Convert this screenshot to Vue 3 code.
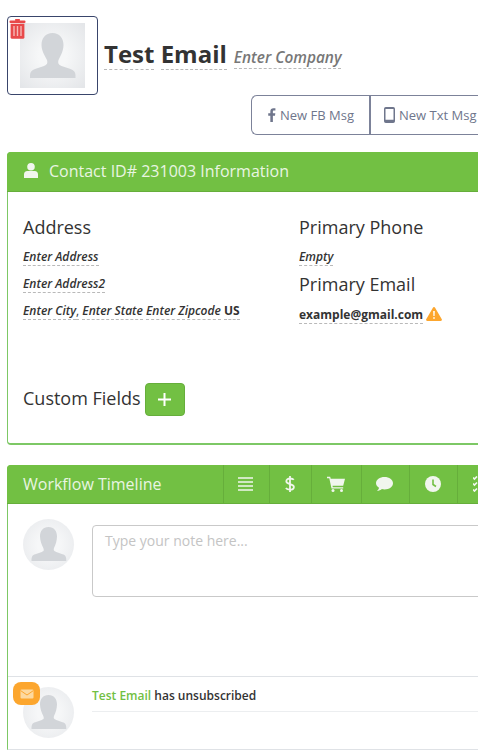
<template>
  <div class="page">
    <header class="contact-head">
      <div class="photo">
        <svg class="trash" viewBox="0 0 17 20">
          <rect x="0.5" y="1.5" width="16" height="2.4" rx="1" fill="#e8494a" />
          <rect x="6" y="0" width="5" height="2" rx="0.8" fill="#e8494a" />
          <path d="M1.6 4.8h13.8v13.4a1.6 1.6 0 0 1-1.6 1.6H3.2a1.6 1.6 0 0 1-1.6-1.6z" fill="#e8494a" />
          <path d="M5 7v10M8.5 7v10M12 7v10" stroke="#f6b9b6" stroke-width="1.4" />
        </svg>
        <div class="photo-img">
          <svg viewBox="0 0 65 65" width="65" height="65">
            <path :d="bust" fill="#d2d5d9" />
          </svg>
        </div>
      </div>
      <h1 class="name">
        <span class="edit">Test</span> <span class="edit">Email</span>
        <span class="company edit">Enter Company</span>
      </h1>
    </header>

    <div class="msg-row">
      <button class="msg-btn first">
        <svg class="ico-fb" viewBox="0 0 9 16"><path d="M2.6 16V8.8H.2V6h2.4V3.9C2.6 1.500 4 .2 6.200 .2c1 0 1.900.1 2.200.1v2.500H6.900c-1.200 0-1.400.6-1.400 1.400V6h2.800l-.4 2.800H5.500V16z" fill="#6f768c" /></svg>
        New FB Msg
      </button>
      <button class="msg-btn">
        <svg class="ico-phone" viewBox="0 0 11 16"><path fill-rule="evenodd" d="M1.800 0h7.400A1.800 1.800 0 0 1 11 1.800v12.400A1.800 1.800 0 0 1 9.200 16H1.800A1.800 1.800 0 0 1 0 14.200V1.800A1.800 1.800 0 0 1 1.800 0zM1.500 2v10.800h8V2z" fill="#6f768c" /></svg>
        New Txt Msg
      </button>
    </div>

    <section class="card info">
      <div class="card-head">
        <svg class="ico-user" viewBox="0 0 14 15"><path d="M7 0a3.800 3.800 0 1 1 0 7.600A3.800 3.800 0 0 1 7 0zM3.500 8h7A3.500 3.500 0 0 1 14 11.500V15H0v-3.500A3.500 3.500 0 0 1 3.500 8z" fill="#f1f6ee" /></svg>
        <span>Contact ID# 231003 Information</span>
      </div>
      <div class="info-body">
        <div class="cols">
          <div class="col-left">
            <h3>Address</h3>
            <p class="line"><em class="edit">Enter Address</em></p>
            <p class="line"><em class="edit">Enter Address2</em></p>
            <p class="line"><em class="edit">Enter City</em><span class="edit">,</span> <em class="edit">Enter State</em> <em class="edit">Enter Zipcode</em> <b class="edit">US</b></p>
          </div>
          <div class="col-right">
            <h3>Primary Phone</h3>
            <p class="line"><em class="edit">Empty</em></p>
            <h3 class="email-title">Primary Email</h3>
            <p class="line email">
              <b class="edit">example@gmail.com</b>
              <svg class="ico-warn" viewBox="0 0 16 14"><path d="M8 0c.5 0 .9.3 1.100.7l6.700 11.500c.4.800-.1 1.800-1.100 1.800H1.300c-1 0-1.500-1-1.100-1.800L6.900.7C7.100.3 7.500 0 8 0z" fill="#fca62e" /><path d="M7.200 4h1.600l-.2 5H7.400zM7.200 10.200h1.600v1.600H7.200z" fill="#fff" /></svg>
            </p>
          </div>
        </div>
        <div class="custom">
          <h3>Custom Fields</h3>
          <button class="add">
            <svg viewBox="0 0 13 13" width="13" height="13"><path d="M6.500 0v13M0 6.500h13" stroke="#fff" stroke-width="2" /></svg>
          </button>
        </div>
      </div>
    </section>

    <section class="card timeline">
      <div class="tl-head">
        <div class="tl-title">Workflow Timeline</div>
        <div class="tab" style="width: 46px">
          <svg viewBox="0 0 15 14" width="15" height="14"><path d="M0 1h15M0 5h15M0 9h15M0 13h15" stroke="#f1f6ee" stroke-width="1.600" /></svg>
        </div>
        <div class="tab" style="width: 42px">
          <svg viewBox="0 0 10 16" width="10" height="16"><path d="M8.800 3.800C8 2.800 6.500 2.500 5 2.500c-2 0-3.700.9-3.700 2.700 0 3.800 7.600 1.800 7.600 5.700 0 1.800-1.900 2.700-3.900 2.700-1.700 0-3.300-.5-4.100-1.700M5 0v16" fill="none" stroke="#f1f6ee" stroke-width="1.800" /></svg>
        </div>
        <div class="tab" style="width: 50px">
          <svg viewBox="0 0 18 16" width="18" height="16"><path d="M0 .8h3.200l.5 2H18l-1.800 7H5.500l.3 1.400h10.400v1.400H4.500L2.300 2.300H0z" fill="#f1f6ee" /><circle cx="6" cy="14.500" r="1.500" fill="#f1f6ee" /><circle cx="14.500" cy="14.500" r="1.500" fill="#f1f6ee" /></svg>
        </div>
        <div class="tab" style="width: 48px">
          <svg viewBox="0 0 17 14" width="17" height="14"><path d="M8.500 0C13.200 0 17 2.700 17 6.200s-3.800 6.200-8.500 6.200c-.9 0-1.800-.1-2.600-.3C4.800 13.200 3 14 1 14c1-1 1.800-2 2-3.300C1.200 9.600 0 8 0 6.200 0 2.700 3.800 0 8.500 0z" fill="#f1f6ee" /></svg>
        </div>
        <div class="tab" style="width: 48px">
          <svg viewBox="0 0 16 16" width="16" height="16"><circle cx="8" cy="8" r="8" fill="#f1f6ee" /><path d="M8 3.500V8.500L11 10.500" fill="none" stroke="#72c043" stroke-width="1.600" /></svg>
        </div>
        <div class="tab" style="width: 48px">
          <svg viewBox="0 0 16 16" width="16" height="16"><path d="M0 1.500l1.500 1.500L4 .5M0 7.500l1.500 1.500L4 6.500M0 13.500l1.500 1.500L4 12.500M6.500 2h9.500M6.500 8h9.500M6.500 14h9.500" fill="none" stroke="#f1f6ee" stroke-width="1.700" /></svg>
        </div>
      </div>
      <div class="composer">
        <div class="round">
          <svg viewBox="0 0 51 51" width="51" height="51"><path :d="bustSmall" fill="#d2d5d9" /></svg>
        </div>
        <div class="note">Type your note here...</div>
      </div>
      <div class="event">
        <div class="event-avatar">
          <div class="round">
            <svg viewBox="0 0 51 51" width="51" height="51"><path :d="bustSmall" fill="#d2d5d9" /></svg>
          </div>
          <div class="badge">
            <svg viewBox="0 0 14 10" width="14" height="10"><rect x="0.500" y="0.500" width="13" height="9" rx="1" fill="#fdd9a0" /><path d="M.5 1.500L7 6l6.500-4.500" fill="none" stroke="#fca62e" stroke-width="1" /></svg>
          </div>
        </div>
        <div class="event-text">
          <div class="event-line"><a class="who">Test Email</a> has unsubscribed</div>
        </div>
      </div>
    </section>
  </div>
</template>

<script setup>
const bust = "M32.500 10c7 0 11 5 11 12 0 6-3 11-5 15-1 3 0 5 3 6l9 3c3 1 5 3 5 6v3H10v-3c0-3 2-5 5-6l9-3c3-1 4-3 3-6-2-4-5.500-9-5.500-15 0-7 4-12 11-12z";
const bustSmall = "M25.500 8c5.500 0 8.500 4 8.500 9.500 0 4-1.500 8.500-3 11.500-.8 2.300 0 3 2.300 3.900l6.200 2.300c3 .8 3.800 2.300 3.800 6.800H8.500c0-4.500 .8-6 3.800-6.800l6.500-2.300c2.300-.9 2.300-1.600 1.500-3.900-1.500-3-3.300-7.500-3.300-11.500C17 12 20 8 25.500 8z";
</script>

<style>
html,
body {
  margin: 0;
  background: #fff;
}
</style>

<style scoped>
.page {
  width: 478px;
  height: 750px;
  overflow: hidden;
  position: relative;
  box-sizing: border-box;
  padding: 16px 0 0 7px;
  font-family: "Open Sans", sans-serif;
  color: #333;
}

.contact-head {
  display: flex;
  align-items: flex-start;
}

.photo {
  position: relative;
  width: 91px;
  height: 79px;
  box-sizing: border-box;
  border: 1px solid #39456b;
  border-radius: 4px;
  padding: 6px 0 0 12px;
}

.photo-img {
  width: 65px;
  height: 65px;
  background: radial-gradient(circle, #f6f7f8 30%, #e3e5e8 100%);
}

.photo-img svg {
  display: block;
}

.trash {
  position: absolute;
  left: 1px;
  top: 2px;
  width: 17px;
  height: 20px;
}

.name {
  margin: 21px 0 0 6px;
  font-size: 24px;
  line-height: 33px;
  font-weight: 700;
  color: #333;
  white-space: nowrap;
}

.edit {
  border-bottom: 1px dashed #b9b9b9;
}

.name .edit {
  display: inline-block;
  line-height: 31px;
}

.name .company {
  margin-left: 7px;
  font-size: 15.4px;
  line-height: 20px;
  font-style: italic;
  font-weight: 600;
  color: #777;
}

.msg-row {
  display: flex;
  margin: 0 0 0 244px;
  height: 40px;
}

.msg-btn {
  flex: none;
  box-sizing: border-box;
  height: 40px;
  padding: 0 14px 0 13px;
  display: flex;
  align-items: center;
  background: #fff;
  border: 1px solid #7c8299;
  border-left-width: 2px;
  font-family: inherit;
  font-size: 13px;
  color: #6f768c;
  white-space: nowrap;
}

.msg-btn.first {
  width: 118px;
  padding: 0 0 0 16px;
  border-left-width: 1px;
  border-right-width: 0;
  border-radius: 6px 0 0 6px;
}

.ico-fb {
  width: 8px;
  height: 14px;
  margin-right: 4px;
}

.ico-phone {
  width: 11px;
  height: 16px;
  margin-right: 4px;
}

.card {
  width: 540px;
  box-sizing: border-box;
  border: 1px solid #7dc865;
  border-radius: 4px;
}

.info {
  margin-top: 17px;
  height: 293px;
  border-bottom-width: 2px;
}

.card-head {
  height: 37px;
  margin: -1px -1px 0;
  background: #72c043;
  border-bottom: 1px solid #66ae3b;
  border-radius: 4px 4px 0 0;
  display: flex;
  align-items: center;
  padding: 0 0 2px 17px;
  font-size: 16px;
  color: #e9f5e2;
}

.ico-user {
  width: 14px;
  height: 15px;
  margin-right: 11px;
}

.info-body {
  padding: 22px 0 0 15px;
}

.cols {
  display: flex;
  height: 169px;
}

.col-left {
  width: 276px;
}

h3 {
  margin: 0;
  font-size: 18px;
  line-height: 26px;
  font-weight: 400;
  color: #333;
}

.line {
  margin: 8px 0 0;
  height: 20px;
  font-size: 12px;
  line-height: 17px;
  color: #333;
  white-space: nowrap;
}

.line em {
  font-weight: 600;
}

.line b {
  font-weight: 700;
}

.col-left .line + .line {
  margin-top: 7px;
}

.email-title {
  margin-top: 3px;
}

.email {
  margin-top: 9px;
  display: flex;
  align-items: flex-start;
}

.ico-warn {
  width: 16px;
  height: 14px;
  margin: 1px 0 0 3px;
}

.custom {
  display: flex;
  align-items: center;
  gap: 4px;
}

.custom h3 {
  margin-top: -3px;
}

.add {
  width: 40px;
  height: 33px;
  padding: 0;
  background: #72c043;
  border: 1px solid #66ae3b;
  border-radius: 4px;
  display: flex;
  align-items: center;
  justify-content: center;
}

.timeline {
  margin-top: 20px;
  height: 285px;
  border-color: #7dc865 #dfe2e6 #dfe2e6 #7dc865;
  border-radius: 4px 4px 0 0;
}

.tl-head {
  display: flex;
  box-sizing: border-box;
  height: 39px;
  margin: -1px -1px 0;
  background: #72c043;
  border-bottom: 1px solid #66ae3b;
  border-radius: 4px 4px 0 0;
  color: #e9f5e2;
}

.tl-title {
  width: 216px;
  flex: none;
  padding-left: 16px;
  box-sizing: border-box;
  font-size: 16px;
  line-height: 38px;
}

.tab {
  flex: none;
  box-sizing: border-box;
  border-left: 1px solid #66ae3b;
  padding-right: 2px;
  display: flex;
  align-items: center;
  justify-content: center;
}

.composer {
  display: flex;
  align-items: flex-start;
  gap: 18px;
  padding: 15px 0 0 15px;
  height: 172px;
  box-sizing: border-box;
}

.round {
  width: 51px;
  height: 51px;
  flex: none;
  border-radius: 50%;
  overflow: hidden;
  background: radial-gradient(circle, #f6f7f8 30%, #e6e8eb 100%);
}

.round svg {
  display: block;
}

.note {
  width: 500px;
  height: 72px;
  margin-top: 6px;
  box-sizing: border-box;
  border: 1px solid #c9c9c9;
  border-radius: 4px;
  padding: 5px 12px;
  font-size: 14px;
  line-height: 20px;
  color: #c4c4c4;
}

.event {
  display: flex;
  gap: 18px;
  border-top: 1px solid #dfe2e6;
  padding: 10px 0 0 15px;
}

.event-avatar {
  position: relative;
  flex: none;
}

.badge {
  position: absolute;
  left: -10px;
  top: -5px;
  width: 27px;
  height: 23px;
  border-radius: 8px;
  background: #fca62e;
  display: flex;
  align-items: center;
  justify-content: center;
}

.event-text {
  flex: 1;
}

.event-line {
  height: 24px;
  border-bottom: 1px solid #eceef0;
  font-size: 12px;
  font-weight: 600;
  line-height: 17px;
  color: #333;
}

.who {
  color: #72c043;
}
</style>
